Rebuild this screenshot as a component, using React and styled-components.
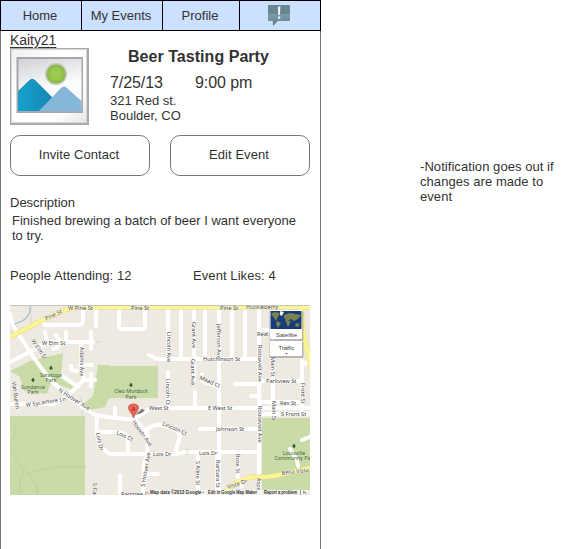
import React from "react";
import styled, { createGlobalStyle } from "styled-components";

const GlobalStyle = createGlobalStyle`
  * { box-sizing: border-box; }
  body {
    margin: 0;
    background: #fff;
    color: #333;
    font: 13px/15px "Liberation Sans", Arial, sans-serif;
    overflow: hidden;
  }
`;

const Page = styled.div`
  display: flex;
  align-items: flex-start;
  width: 571px;
  height: 549px;
`;

const Phone = styled.main`
  width: 321px;
  height: 549px;
  flex: none;
  border: solid #777;
  border-width: 0 1px;
`;

const Nav = styled.nav`
  display: grid;
  grid-template-columns: 81px 81px 77px 81px;
  width: 321px;
  height: 31px;
  margin-left: -1px;
  border: solid #000;
  border-width: 1px 0 1px 1px;
  background: #cce0ff;
`;

const NavItem = styled.a`
  display: flex;
  align-items: center;
  justify-content: center;
  border-right: 1px solid #000;
  padding-right: 2px;
`;

const Content = styled.div`
  padding: 2px 10px 0 9px;
`;

const UserLink = styled.a`
  display: block;
  width: max-content;
  height: 15px;
  font-size: 14px;
  text-decoration: underline;
  text-underline-offset: 2px;
  letter-spacing: -0.05px;
`;

const EventHeader = styled.header`
  display: flex;
  height: 87px;
`;

const Details = styled.div`
  margin-left: 21px;
  flex: 1;
`;

const Title = styled.h1`
  margin: 0 0 0 18px;
  font-size: 16px;
  line-height: 18px;
  letter-spacing: 0.04px;
  white-space: nowrap;
`;

const When = styled.div`
  display: flex;
  margin-top: 8px;
  font-size: 16px;
  line-height: 18px;
  letter-spacing: -0.08px;
`;

const DateText = styled.span`
  width: 85px;
`;

const Address = styled.address`
  font-style: normal;
  margin-top: 1px;
`;

const Actions = styled.div`
  display: flex;
  justify-content: space-between;
`;

const ActionButton = styled.button`
  width: 140px;
  height: 41px;
  padding: 0 2px 2px 0;
  border: 1px solid #777;
  border-radius: 10px;
  background: #fff;
  color: inherit;
  font: inherit;
  letter-spacing: 0.06px;
`;

const Label = styled.h2`
  margin: 19px 0 0;
  font: inherit;
`;

const Description = styled.p`
  margin: 3px 0 0 2px;
`;

const Stats = styled.div`
  display: flex;
  margin: 25px 0 22px;
  letter-spacing: 0.08px;
`;

const Stat = styled.span`
  flex: none;
  width: ${(p) => p.$width}px;
  white-space: nowrap;
`;

const Note = styled.aside`
  width: 145px;
  margin: 159px 0 0 99px;
  letter-spacing: 0.06px;
`;

const MapSvg = styled.svg`
  display: block;
  width: 300px;
  height: 190px;
  font-family: "Noto Sans", sans-serif;
  font-size: 5.65px;
`;

const AlertIcon = () => (
  <svg width="24" height="23" viewBox="0 0 24 23">
    <defs>
      <linearGradient id="bubble" x1="0" y1="0" x2="0" y2="1">
        <stop offset="0" stopColor="#6a8791" />
        <stop offset="0.4" stopColor="#688690" />
        <stop offset="0.45" stopColor="#799ca8" />
        <stop offset="1" stopColor="#607f8c" />
      </linearGradient>
    </defs>
    <path d="M2 1H22Q23 1 23 2V16Q23 17 22 17H11L6 22 5.700 17H2Q1 17 1 16V2Q1 1 2 1Z" fill="url(#bubble)" />
    <path d="M10.800 2.500h2.600l-.5 8.500h-1.600zM11 12.500h2.200v2.200h-2.200z" fill="#f1f5f5" />
  </svg>
);

const Picture = () => (
  <svg width="79" height="77" viewBox="0 0 79 77">
    <defs>
      <linearGradient id="mat" x1="0" y1="0" x2="1" y2="1">
        <stop offset="0" stopColor="#f0f0f0" />
        <stop offset="0.35" stopColor="#fff" />
        <stop offset="0.8" stopColor="#fbfbfb" />
        <stop offset="1" stopColor="#e6e6e6" />
      </linearGradient>
      <linearGradient id="sky" x1="0" y1="0" x2="0.3" y2="1">
        <stop offset="0" stopColor="#d1d2d5" />
        <stop offset="0.65" stopColor="#fcfcfc" />
      </linearGradient>
      <radialGradient id="sun"><stop offset="0.5" stopColor="#9aca4d" /><stop offset="1" stopColor="#88b448" /></radialGradient>
      <linearGradient id="hill"><stop stopColor="#16a1cc" /><stop offset="1" stopColor="#1687b5" /></linearGradient>
    </defs>
    <rect width="79" height="77" fill="#aaa" />
    <rect x="1" y="1" width="76" height="74" fill="#d7d7d7" />
    <rect x="2" y="2" width="74" height="72" fill="url(#mat)" />
    <rect x="6.500" y="9" width="66.500" height="56" fill="#a5a7aa" />
    <rect x="8.500" y="11" width="63" height="52" fill="url(#sky)" />
    <circle cx="46" cy="26" r="11" fill="#c4c7c1" />
    <circle cx="46" cy="26" r="9.500" fill="url(#sun)" />
    <path d="M8 43 19 32.500Q22 29 25.500 32.500L42 49V63H8Z" fill="url(#hill)" />
    <path d="M29 63 50 41Q54 36 58 41L71.500 53V63Z" fill="#87b7d8" />
    <path d="M8 63.500H72" stroke="#9eabb2" />
  </svg>
);

const roads = [
  "M10 314 13 326 23 341 34 358 48 377 64 393 80 405 95 415 107 417 126 419 134 419 146 431 148 437 147 455 144 465 143 494",
  "M10 362 28 353 44 344 52 342H93",
  "M43 321 45 325H80Q83 325 83 318V307M96 307V326",
  "M45 332 47 343M56 335 60 342Q60 348 53 349M66 332V342M81 342V365L84 379 75 389 62 400 54 404H10M91 332V349M80 365H92M71 366Q70 371 77 371M62 376 78 387M83 380H95M91 373V387",
  "M119 307V326Q119 329 123 329H142Q145 329 145 326V307",
  "M168 308V358M181 307V358M194 307V358M205 307V358M149 355 157 359H261M219 308V494M232 307V359M245 307V359",
  "M168 372V407M194 358V380M195 392V407M202 374V381L216 386",
  "M134 419 151 408H310M168 397V408M219 380V408M115 418V408",
  "M97 417Q96 430 98 439 101 449 110 454H176L185 452M107 432H117Q128 433 128 441V454M97 432H107",
  "M146 431Q151 424 162 425 179 429 180 436L175 454M190 452H259M198 452V494M217 452V491M238 452V473Q237 482 242 486",
  "M120 475V494M146 474H158M143 477H146M204 429H259M200 429H219",
  "M259 307V494M259 330H275M273 329V415M260 381H300M235 384H260M251 396H260M302 400V414M302 361V396M302 365 310 361M260 402H300M260 414H310M252 396H259V414",
];
const labels = [
  ["Pine St", 46, 320.5, -25], ["W Pine St", 68, 309.5], ["Pine St", 131, 309.5],
  ["Pine St", 220, 309.5], ["Huckleberry", 246, 308.7], ["W Elm St", 31, 341, 55],
  ["W Elm St", 42, 345], ["Adams Ave", 79.5, 347, 90], ["Lincoln Ave", 167, 332, 90],
  ["Lincoln Ct", 166, 379, 90], ["Grant Ave", 191.5, 322, 90], ["Grant Ave", 191, 359, 90],
  ["Jefferson Ave", 217, 324, 90], ["Hutchinson St", 203, 361], ["Roosevelt Ave", 257.5, 345, 90],
  ["Roosevelt Ave", 257.5, 406, 90], ["Main St", 270.5, 357, 90], ["Main St", 271.5, 401, 90],
  ["Parkview St", 266, 383], ["Front St", 300.5, 383, 90], ["Real St", 257, 336],
  ["Mead Ct", 199, 379, 24], ["West St", 149, 410], ["E West St", 208, 410],
  ["Rex St", 280, 405], ["S Front St", 281, 416], ["Johnson St", 216, 431],
  ["Lois Dr", 153, 456], ["Lois Dr", 199, 455], ["Lincoln Ct", 162, 425, 24],
  ["Lois Ct", 116, 434, 25], ["Lois Dr", 96, 433, 78],
  ["N Hoover Ave", 58, 391, 33], ["Hoover Ave", 132, 422, 55],
  ["S Hoover Ave", 144.5, 487, -80], ["W Sycamore Ln", 26, 407, -9],
  ["Van Buren", 12, 382, 82], ["Barbara St", 215.5, 460, 90], ["Rose St", 235.5, 454, 90],
  ["S Aline St", 195.5, 461, 90], ["Aspe", 257, 478, 90], ["Vista Dr", 228, 489, -18],
  ["Bella Vista", 282, 475, -7], ["S Cart", 93, 483, 90, 13],
  ["Raintree Ct", 121, 496],
];

const StreetMap = () => (
  <MapSvg viewBox="10 305 300 190" aria-label="Event location map">
    <rect x="10" y="305" width="300" height="190" fill="#eee9e1" />
    <g fill="#c9dca8">
      <path d="M10 371 30 361 63 353 61 374 75 385 71 389 51 382 47 394 24 391 20 377ZM10 416H85V495H10ZM98 366H158V398H108Q98 398 98 391ZM262 418H310V495H262ZM83 404 93 396 98 365 110 365V396L105 407 91 410Z" />
    </g>
    <g fill="none" stroke="#d7d3c6" strokeWidth=".7">
      <path d="M31 305V324Q23 331 10 331M60 342H100M157 359V396M80 396Q85 409 80 421L85 437M180 454Q186 448 190 450" />
      <path stroke="#b9c99b" d="M10 422Q18 425 14 439L10 441M10 451 21 465 28 474 39 470 55 467H87M21 465Q25 473 20 480V495M28 474 36 484 38 495" />
    </g>
    <path d="M30 305Q31 317 22 321T10 325" fill="none" stroke="#a5bbd0" strokeWidth="1.200" />
    <g fill="none" stroke="#fff" strokeWidth="4" strokeLinecap="round" strokeLinejoin="round">
      {roads.map((d) => <path key={d} d={d} />)}
      <path d="M290 449 297 460 298 466M302 440 312 436" />
    </g>
    <g fill="none" strokeLinejoin="round">
      <path d="M10 337 39 322 62 311Q71 307 88 307H310M222 494 237 482 252 477Q260 478 274 476L310 468M301 307 303 331 312 371" stroke="#e6dc83" strokeWidth="5" />
      <path d="M10 337 39 322 62 311Q71 307 88 307H310M222 494 237 482 252 477Q260 478 274 476L310 468M301 307 303 331 312 371" stroke="#fbf596" strokeWidth="4.100" />
    </g>
    <g fill="#444" stroke="#fff" strokeWidth=".6" paintOrder="stroke" strokeLinejoin="round">
      {labels.map(([text, x, y, angle = 0], i) => (
        <text key={i} x={x} y={y} transform={`rotate(${angle} ${x} ${y})`}>{text}</text>
      ))}
    </g>
    <g fill="#46613f" textAnchor="middle" fontSize="5.2">
      <text x="51" y="376.500">Saratoga</text><text x="51" y="382.300">Park</text>
      <text x="33" y="388.700">Sundance</text><text x="33" y="394.300">Park</text>
      <text x="131" y="393">Cleo Murdock</text><text x="131" y="398.500">Park</text>
      <text x="294" y="454.500">Louisville</text><text x="292.500" y="460">Community Pa</text>
    </g>
    <g fill="#35573d">
      {[[51, 368], [33, 380], [131, 385], [294, 446]].map(([x, y]) => (
        <path key={x} d={`M${x} ${y - 2.500}l2 3-1.300.2v1.300h-1.400v-1.300l-1.300-.2z`} />
      ))}
    </g>
    <path d="M135 415 142 409 145 410 142 413Z" fill="#4b4b45" opacity=".7" />
    <path d="M133.500 418Q132.500 414 130 411.500C127 407 129 404 133.500 404S140 407 137 411.500Q134.500 414 133.500 418Z" fill="#f26357" stroke="#b4463d" strokeWidth=".7" />
    <text x="133.500" y="410.500" textAnchor="middle" fontSize="6" fill="#602721">A</text>
    <rect x="269.500" y="311" width="34" height="30" rx="1" fill="#777" opacity=".45" />
    <rect x="270" y="310" width="32" height="29" rx="1" fill="#fff" />
    <rect x="270.500" y="311" width="31" height="18" fill="#193b79" />
    <path d="M271 314 274 312 280 313 278 317 276 321 274 318ZM284 315 290 313 301 315 298 319 294 321 291 319 287 321 284 318ZM277 321 281 323 278 328 276 324ZM285 320 291 321 288 327ZM296 323 300 324 298 327 295 326Z" fill="#77834f" />
    <path d="M280 311 284 312 282 316 280 315Z" fill="#eef0e9" />
    <rect x="269.500" y="342" width="34" height="16" rx="1" fill="#777" opacity=".45" />
    <rect x="270" y="341" width="32" height="15" rx="1" fill="#fff" />
    <g fontFamily="Liberation Sans" fill="#444" textAnchor="middle" fontSize="6">
      <text x="286.500" y="336.500" textLength="21">Satellite</text>
      <text x="286.500" y="349.500" textLength="16">Traffic</text>
    </g>
    <path d="M285 353H288L286.500 354.500Z" fill="#666" />
    <rect x="149" y="490" width="161" height="5" fill="#f4f3ef" opacity=".93" />
    <g fill="#333" fontFamily="Liberation Sans" fontSize="4.6" fontWeight="bold">
      <text x="150" y="494" textLength="54" lengthAdjust="spacingAndGlyphs">Map data ©2013 Google -</text>
      <text x="208" y="494" textLength="49" lengthAdjust="spacingAndGlyphs">Edit in Google Map Maker</text>
      <text x="264" y="494" textLength="33" lengthAdjust="spacingAndGlyphs">Report a problem</text>
    </g>
    <path d="M300.500 490V495M306 493 303.500 491.500V493.500M303.500 491.500 306.500 494" fill="none" stroke="#666" strokeWidth=".6" />
    <rect x="10" y="305" width="300" height="1" fill="#c4c4bc" />
  </MapSvg>
);

export default function App() {
  return (
    <>
      <GlobalStyle />
      <Page>
        <Phone>
          <Nav>
            <NavItem>Home</NavItem>
            <NavItem>My Events</NavItem>
            <NavItem>Profile</NavItem>
            <NavItem><AlertIcon /></NavItem>
          </Nav>
          <Content>
            <UserLink>Kaity21</UserLink>
            <EventHeader>
              <Picture />
              <Details>
                <Title>Beer Tasting Party</Title>
                <When><DateText>7/25/13</DateText><span>9:00 pm</span></When>
                <Address>321 Red st.<br />Boulder, CO</Address>
              </Details>
            </EventHeader>
            <Actions>
              <ActionButton>Invite Contact</ActionButton>
              <ActionButton>Edit Event</ActionButton>
            </Actions>
            <Label>Description</Label>
            <Description>Finished brewing a batch of beer I want everyone to try.</Description>
            <Stats><Stat $width={183}>People Attending: 12</Stat><Stat $width={100}>Event Likes: 4</Stat></Stats>
            <StreetMap />
          </Content>
        </Phone>
        <Note>-Notification goes out if changes are made to event</Note>
      </Page>
    </>
  );
}
